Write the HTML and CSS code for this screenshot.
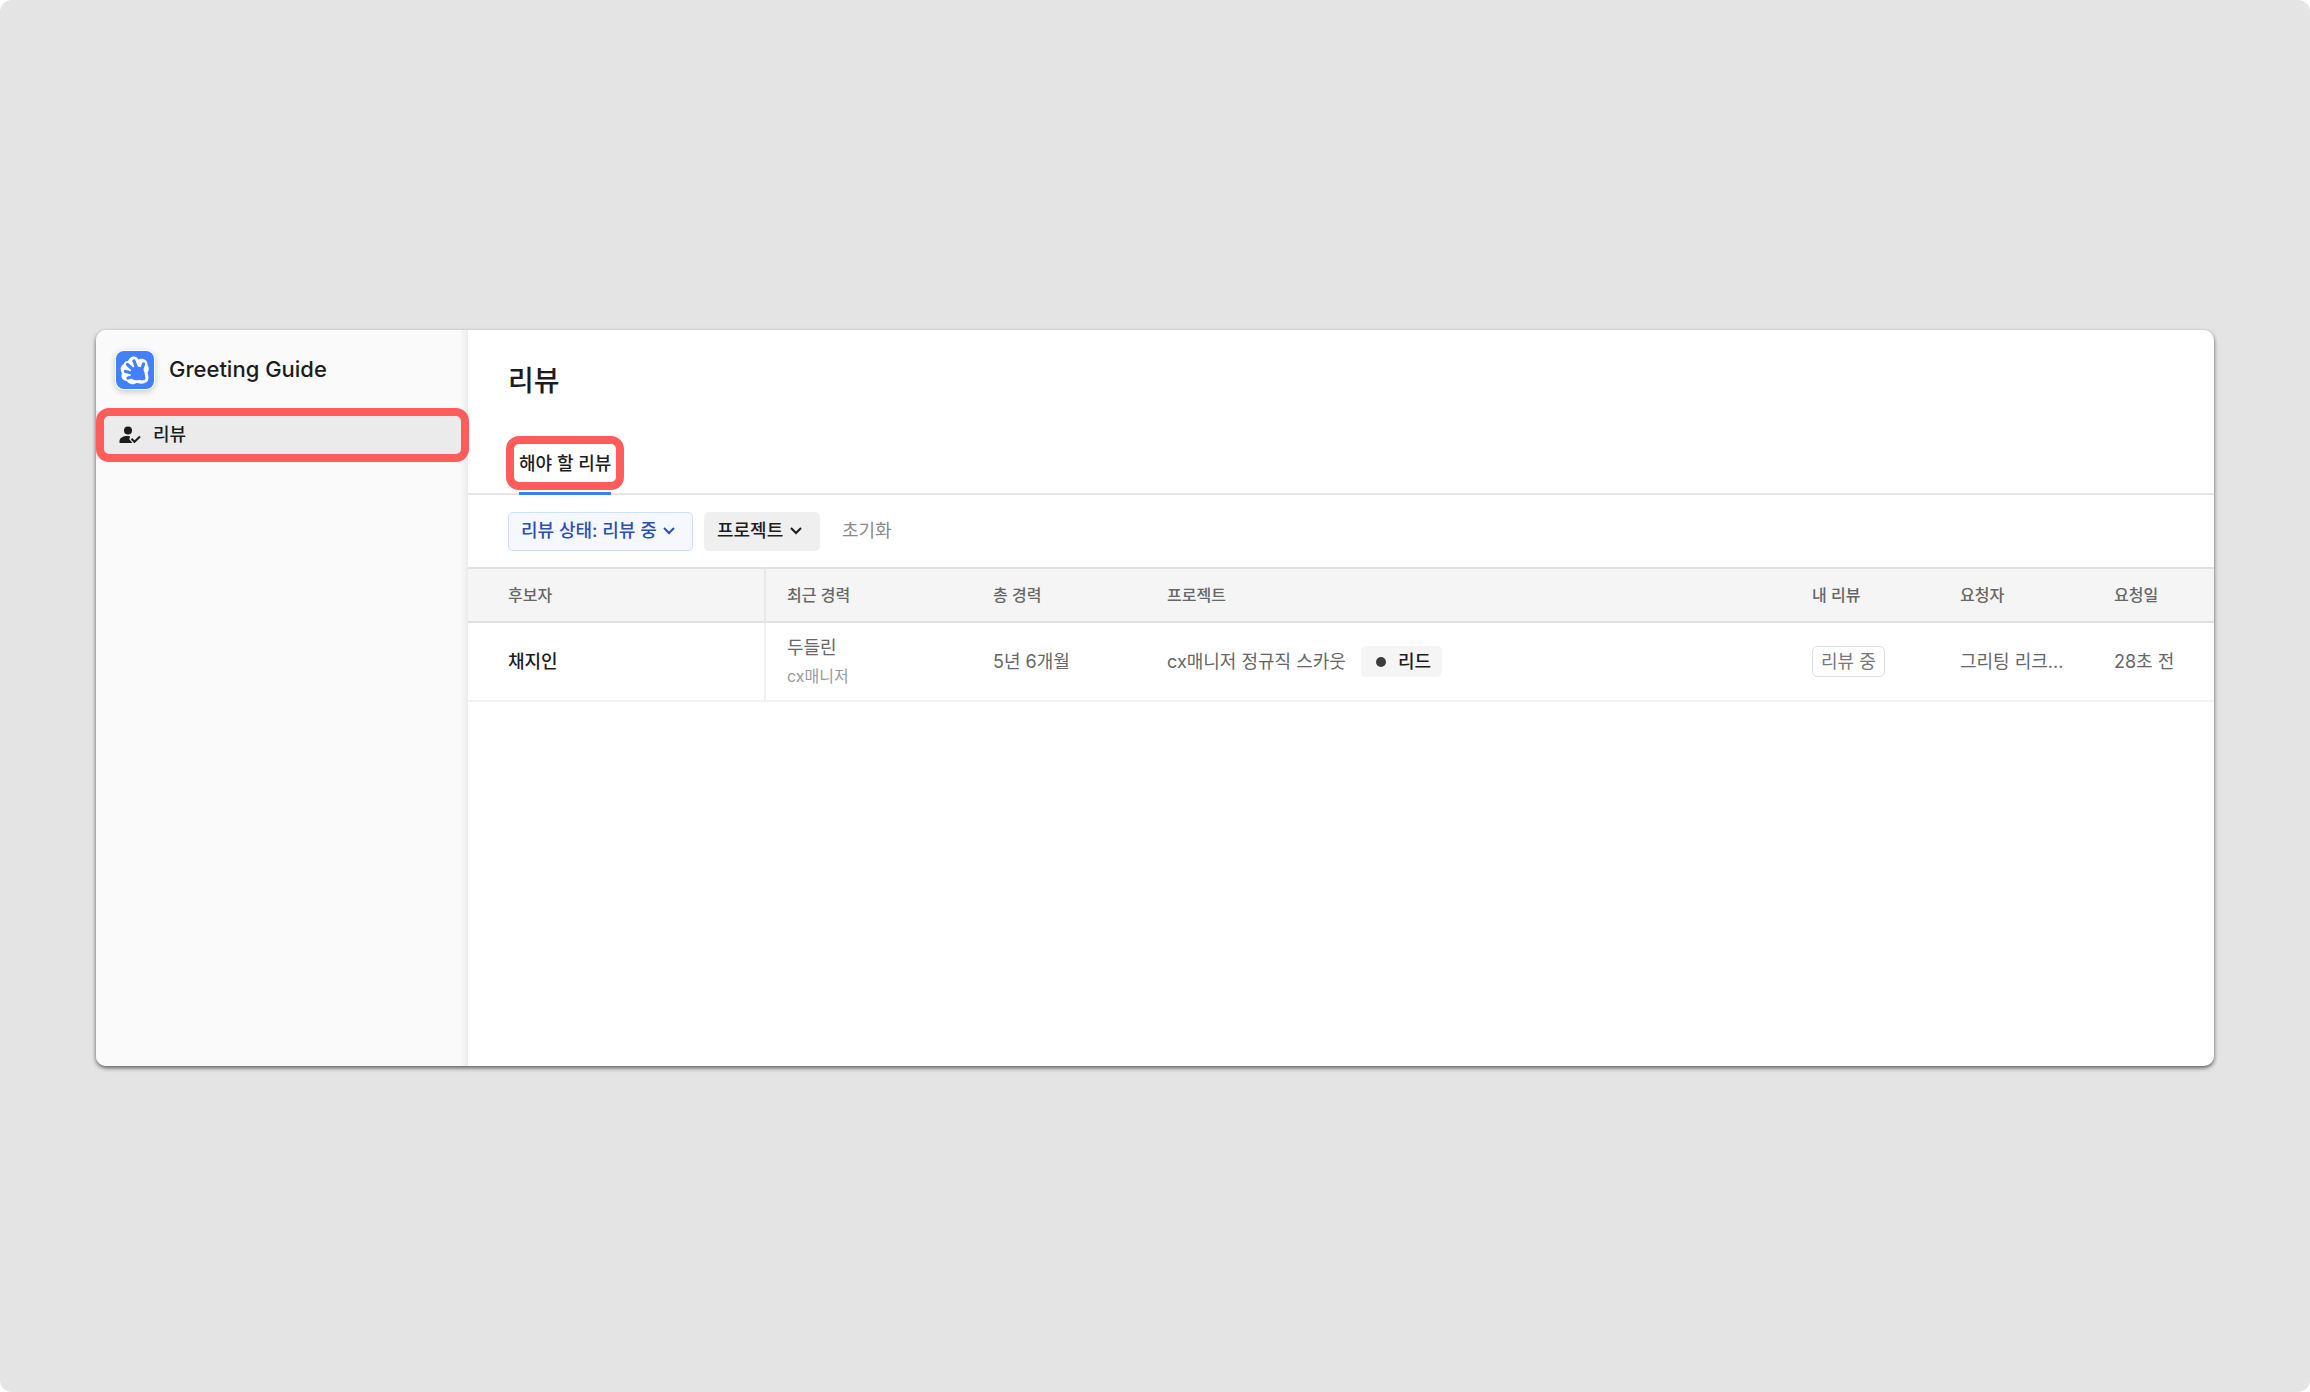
FILE: index.html
```
<!DOCTYPE html>
<html lang="ko">
<head>
    <meta charset="UTF-8">
    <meta name="viewport" content="width=device-width, initial-scale=1.0">
    <title>리뷰 - Greeting Guide</title>
    <link rel="stylesheet" href="styles.css">
</head>
<body>
    <div class="stage">
        <div class="app">
            <aside class="sidebar">
                <div class="brand">
                    <svg class="brand-logo" viewBox="0 0 40 40" aria-hidden="true">
                        <rect width="40" height="40" rx="9" fill="#fff"/>
                        <rect x="1" y="1" width="38" height="38" rx="8" fill="#4380fb"/>
                        <!-- white cloud behind the hand -->
                        <path d="M13 11C14.500 6 21 4.500 23.500 9.500C27 7.500 33 9.500 32.500 15C34.500 18 34 20 32.500 22.500C34.500 28 33.500 33 28 33.500C25 34 23 33 21.500 33C18 35.500 13 34 12 31C7.500 31 5.500 27 7 23.500C4.500 19 6 15 8.500 14.500C9 12 11 11 13 11Z" fill="#fff"/>
                        <!-- palm and fingers -->
                        <path d="M16 19.500L20 16L27.500 17.500L29.500 22.500L30.500 28.500C29.500 31 27 30.500 24.500 30C22 30.500 19.500 30.500 17 29L15.500 24Z" fill="#4380fb"/>
                        <path d="M28.500 14L26.500 20M19 11L22 19M12.500 14.500L20 21.500M10.500 21.500L19 23.500M13 28L20 26" stroke="#4380fb" stroke-width="3.300" stroke-linecap="round" fill="none"/>
                    </svg>
                    <span class="brand-name">Greeting Guide</span>
                </div>
                <nav>
                    <a class="nav-item highlight" href="#review">
                        <svg class="nav-icon" viewBox="0 0 22 18" aria-hidden="true">
                            <circle cx="9" cy="4.500" r="4" fill="#1c1c1e"/>
                            <path d="M.5 17V15C.5 12 4 10 8.500 10C9.500 10 10.300 10.100 11 10.300L10.300 13.300L13.500 17Z" fill="#1c1c1e"/>
                            <path d="M12.500 12.800L15.500 15.800L21 10.500" fill="none" stroke="#1c1c1e" stroke-width="2"/>
                        </svg>
                        리뷰
                    </a>
                </nav>
            </aside>

            <main class="content" id="review">
                <h1>리뷰</h1>
                <div class="tabs">
                    <a class="tab highlight" href="#todo">해야 할 리뷰</a>
                </div>
                <div class="filters">
                    <span class="filter filter-active">
                        <select aria-label="리뷰 상태">
                            <option>리뷰 상태: 리뷰 중</option>
                        </select>
                        <svg class="chevron" viewBox="0 0 12 8" aria-hidden="true"><path d="M1 1L6 6L11 1"/></svg>
                    </span>
                    <span class="filter">
                        <select aria-label="프로젝트">
                            <option>프로젝트</option>
                        </select>
                        <svg class="chevron" viewBox="0 0 12 8" aria-hidden="true"><path d="M1 1L6 6L11 1"/></svg>
                    </span>
                    <button class="reset" type="button">초기화</button>
                </div>
                <table>
                    <colgroup>
                        <col class="col-name">
                        <col class="col-career">
                        <col class="col-total">
                        <col>
                        <col class="col-review">
                        <col class="col-requester">
                        <col class="col-date">
                    </colgroup>
                    <thead>
                        <tr>
                            <th>후보자</th>
                            <th>최근 경력</th>
                            <th>총 경력</th>
                            <th>프로젝트</th>
                            <th>내 리뷰</th>
                            <th>요청자</th>
                            <th>요청일</th>
                        </tr>
                    </thead>
                    <tbody>
                        <tr>
                            <td class="candidate">채지인</td>
                            <td>
                                <div class="company">두들린</div>
                                <div class="position">cx매니저</div>
                            </td>
                            <td>5년 6개월</td>
                            <td>
                                <div class="project">
                                    cx매니저 정규직 스카웃
                                    <span class="stage-chip"><span class="dot"></span>리드</span>
                                </div>
                            </td>
                            <td><span class="status">리뷰 중</span></td>
                            <td>그리팅 리크...</td>
                            <td>28초 전</td>
                        </tr>
                    </tbody>
                </table>
            </main>
        </div>
    </div>
</body>
</html>
```
FILE: styles.css
```
* {
    box-sizing: border-box;
}

body {
    margin: 0;
    background: #fff;
    color: #1c1c1e;
    font-family: Inter, "Noto Sans CJK KR", sans-serif;
    font-size: 18px;
    line-height: 24px;
}

a {
    color: inherit;
    text-decoration: none;
}

.stage {
    display: flex;
    align-items: center;
    min-height: 100vh;
    padding: 4px 96px 0;
    background: #e4e4e4;
    border-radius: 12px;
}

.app {
    display: flex;
    flex: 1;
    min-height: 736px;
    background: #fff;
    border-radius: 10px;
    box-shadow: 0 2px 4px rgba(0, 0, 0, 0.6);
}

/* sidebar */
.sidebar {
    flex: 0 0 372px;
    background: linear-gradient(to left, #ebebeb, #fafafa 8px);
    border-radius: 10px 0 0 10px;
}

.brand {
    display: flex;
    align-items: center;
    gap: 14px;
    height: 81px;
    padding: 0 19px 2px;
}

.brand-logo {
    width: 40px;
    height: 40px;
    border-radius: 9px;
    box-shadow: 0 2px 6px rgba(0, 0, 0, 0.2);
}

.brand-name {
    padding-bottom: 2px;
    font-size: 22px;
    font-weight: 500;
}

.nav-item {
    display: flex;
    align-items: center;
    gap: 12px;
    height: 48px;
    padding: 0 23px;
    background: #ebebeb;
    font-weight: 500;
}

.nav-icon {
    width: 22px;
    height: 18px;
}

/* red frame around the item */
.highlight {
    position: relative;
}

.highlight::after {
    content: "";
    position: absolute;
    inset: -3px -1px -3px 0;
    border: 8px solid #ff5c5c;
    border-radius: 13px;
}

/* main */
.content {
    flex: 1;
    min-width: 0;
}

h1 {
    margin: 0;
    padding: 31px 40px 0;
    font-size: 28px;
    font-weight: 500;
    line-height: 40px;
}

.tabs {
    display: flex;
    margin-top: 37px;
    padding: 0 51px;
    border-bottom: 2px solid #e6e6e6;
}

.tab {
    height: 57px;
    margin-bottom: -2px;
    border-bottom: 3px solid #3b7cf7;
    font-weight: 500;
    line-height: 52px;
}

.tab.highlight::after {
    inset: -2px -13px 2px;
}

.filters {
    display: flex;
    align-items: center;
    gap: 11px;
    height: 72px;
    padding: 0 40px;
}

.filter {
    display: flex;
    align-items: center;
    gap: 6px;
    height: 39px;
    padding: 0 17px 0 12px;
    background: #efefef;
    border: 1px solid #efefef;
    border-radius: 5px;
}

.filter-active {
    background: #f5f8ff;
    border-color: #cfdfff;
    color: #2b4fb5;
}

select,
.reset {
    appearance: none;
    padding: 0;
    background: none;
    border: none;
    color: inherit;
    font: inherit;
    font-weight: 500;
    cursor: pointer;
}

.reset {
    padding: 0 11px;
    color: #8a8a8a;
    font-weight: 400;
}

.chevron {
    width: 12px;
    height: 8px;
    fill: none;
    stroke: currentColor;
    stroke-width: 2;
}

/* table */
table {
    width: 100%;
    table-layout: fixed;
    border-collapse: separate;
    border-spacing: 0;
}

.col-name {
    width: 298px;
}

.col-career {
    width: 206px;
}

.col-total {
    width: 174px;
}

.col-review {
    width: 148px;
}

.col-requester {
    width: 154px;
}

.col-date {
    width: 121px;
}

th,
td {
    padding: 0 0 0 21px;
    text-align: left;
    white-space: nowrap;
}

th {
    height: 56px;
    background: #f5f5f5;
    border-top: 2px solid #e0e0e0;
    border-bottom: 2px solid #e0e0e0;
    color: #666;
    font-size: 16px;
    font-weight: 500;
}

td {
    height: 79px;
    border-bottom: 2px solid #f2f2f2;
    color: #666;
}

th:first-child,
td:first-child {
    padding-left: 40px;
    border-right: 2px solid #e8e8e8;
}

td.candidate {
    border-right-color: #f0f0f0;
    color: #1c1c1e;
    font-weight: 500;
}

.company {
    line-height: 28px;
}

.position {
    color: #999;
    font-size: 16px;
    line-height: 28px;
}

.project {
    display: flex;
    align-items: center;
    gap: 15px;
}

.stage-chip {
    display: inline-flex;
    align-items: center;
    gap: 12px;
    height: 31px;
    padding: 0 11px 0 15px;
    background: #f5f5f5;
    border-radius: 5px;
    color: #1c1c1e;
    font-weight: 500;
}

.dot {
    width: 10px;
    height: 10px;
    background: #3c3c3c;
    border-radius: 50%;
}

.status {
    display: inline-flex;
    align-items: center;
    height: 31px;
    padding: 0 8px;
    border: 1px solid #dedede;
    border-radius: 5px;
    color: #777;
}
```
